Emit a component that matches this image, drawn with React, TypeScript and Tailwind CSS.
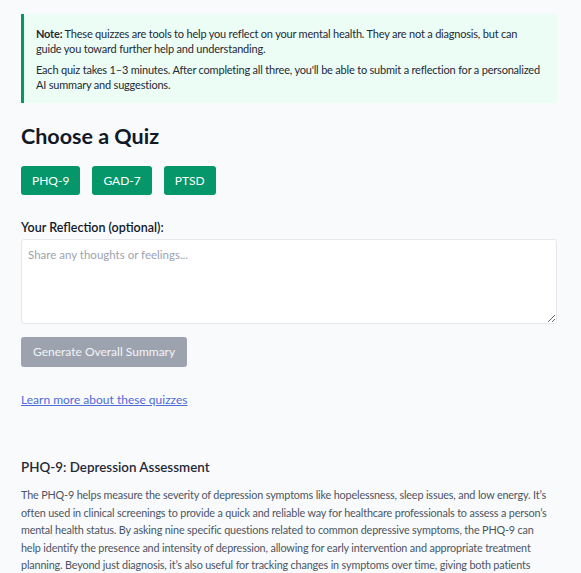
import React from "react";

export default function App() {
  return (
    <div
      className="min-h-[573px] bg-[#f9fafb] text-[#1f2937]"
      style={{ fontFamily: 'Lato, "Open Sans", sans-serif' }}
    >
      <div className="w-[536px] ml-[21px] pt-[14px] pb-10">
        <div className="border-l-[3px] border-[#059669] bg-[#ecfdf5] rounded-r-[3px] pl-[12px] pr-[16px] pt-[12px] pb-[11px] text-[11px] leading-[15px] tracking-[-0.2px] text-[#1f2937]">
          <p>
            <strong className="font-bold">Note:</strong> These quizzes are tools to help you reflect on your mental health. They are not a diagnosis, but can guide you toward further help and understanding.
          </p>
          <p className="mt-[6px]">
            Each quiz takes 1–3 minutes. After completing all three, you'll be able to submit a reflection for a personalized AI summary and suggestions.
          </p>
        </div>

        <h2 className="mt-[18px] text-[21.5px] leading-[30px] font-bold text-[#111827]">Choose a Quiz</h2>

        <div className="mt-[15px] flex gap-[12px]">
          {["PHQ-9", "GAD-7", "PTSD"].map((q) => (
            <button
              key={q}
              className="h-[29px] px-[11px] rounded-[3px] bg-[#059669] text-white text-[12px]"
            >
              {q}
            </button>
          ))}
        </div>

        <label className="block mt-[24px] text-[12.5px] leading-[18px] font-semibold text-[#111827]">
          Your Reflection (optional):
        </label>
        <textarea
          className="block mt-[2px] w-full h-[85px] bg-white border border-[#e5e7eb] rounded-[3px] px-[6px] py-[6px] text-[11.5px] leading-[18px] placeholder:text-[#9ca3af] outline-none"
          placeholder="Share any thoughts or feelings..."
        />

        <button className="mt-[13px] h-[30px] px-[12px] rounded-[3px] bg-[#9ca3af] text-[#f3f4f6] text-[12px]">
          Generate Overall Summary
        </button>

        <div className="mt-[22px] leading-[18px]">
          <a href="#" className="text-[12px] leading-[18px] text-[#4f6bd8] underline">
            Learn more about these quizzes
          </a>
        </div>

        <h3 className="mt-[48px] text-[13.4px] leading-[20px] font-semibold text-[#1f2937]">
          PHQ-9: Depression Assessment
        </h3>
        <p className="mt-[9px] w-[527px] text-[10.8px] leading-[17.5px] tracking-[-0.15px] text-[#4b5563]">
          The PHQ-9 helps measure the severity of depression symptoms like hopelessness, sleep issues, and low energy. It’s often used in clinical screenings to provide a quick and reliable way for healthcare professionals to assess a person’s mental health status. By asking nine specific questions related to common depressive symptoms, the PHQ-9 can help identify the presence and intensity of depression, allowing for early intervention and appropriate treatment planning. Beyond just diagnosis, it’s also useful for tracking changes in symptoms over time, giving both patients and providers a clear picture of how well treatments are working. Its simplicity and effectiveness have made it one of the most widely used tools in mental health care.
        </p>
      </div>
    </div>
  );
}
